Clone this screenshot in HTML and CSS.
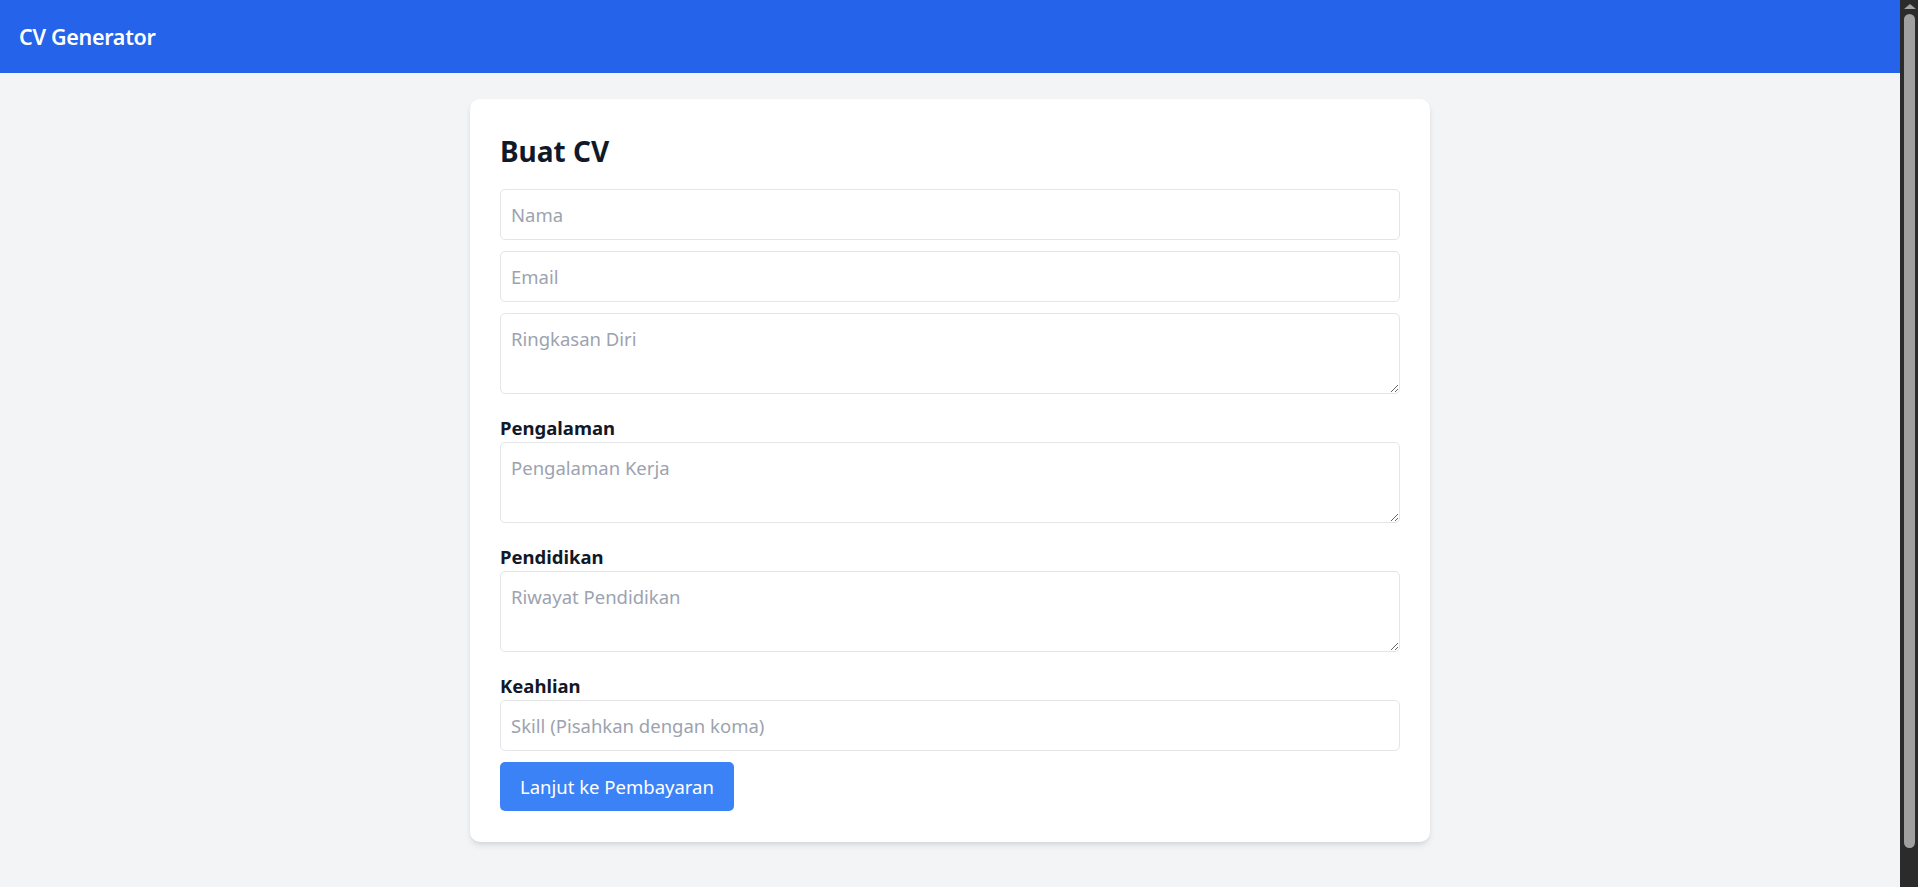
FILE: index.html
```html
<!DOCTYPE html>
<html lang="id">
<head>
<meta charset="utf-8">
<title>CV Generator</title>
<link rel="stylesheet" href="styles.css">
</head>
<body>
<div class="app">
  <header class="topbar">
    <div class="brand">CV Generator</div>
  </header>
  <main class="page">
    <form class="card">
      <h1 class="card-title">Buat CV</h1>
      <div class="fields">
        <input class="field" type="text" placeholder="Nama">
        <input class="field" type="email" placeholder="Email">
        <textarea class="field area" placeholder="Ringkasan Diri"></textarea>
        <div class="group">
          <label class="label">Pengalaman</label>
          <textarea class="field area" placeholder="Pengalaman Kerja"></textarea>
        </div>
        <div class="group">
          <label class="label">Pendidikan</label>
          <textarea class="field area" placeholder="Riwayat Pendidikan"></textarea>
        </div>
        <div class="group">
          <label class="label">Keahlian</label>
          <input class="field" type="text" placeholder="Skill (Pisahkan dengan koma)">
        </div>
        <div class="actions">
          <button class="btn" type="button">Lanjut ke Pembayaran</button>
        </div>
      </div>
    </form>
  </main>
</div>
<div class="scrollbar" aria-hidden="true">
  <span class="scroll-arrow"></span>
  <span class="scroll-thumb"></span>
</div>
</body>
</html>
```
FILE: styles.css
```css
* { box-sizing: border-box; }
html, body { margin: 0; padding: 0; }
body {
  background: #f3f4f6;
  font-family: "Noto Sans", "Open Sans", "DejaVu Sans", sans-serif;
  color: #111827;
}
.app {
  margin-right: 18px;
}
.topbar {
  height: 73px;
  background: #2563eb;
  display: flex;
  align-items: center;
  padding: 0 19px;
}
.brand {
  color: #ffffff;
  font-size: 21.5px;
  font-weight: 600;
  letter-spacing: -0.3px;
  line-height: 32px;
}
.page {
  padding: 26px 0 72px;
}
.card {
  width: 960px;
  margin: 0 auto;
  background: #ffffff;
  border-radius: 10px;
  box-shadow: 0 4px 7px -1px rgba(0,0,0,0.10), 0 2px 5px -2px rgba(0,0,0,0.08);
  padding: 28px 30px 31px;
}
.card-title {
  margin: 0 0 14px;
  font-size: 28px;
  line-height: 48px;
  font-weight: 700;
  color: #111827;
}
.fields {
  display: flex;
  flex-direction: column;
  gap: 11px;
}
.group {
  display: flex;
  flex-direction: column;
  margin-top: 8px;
}
.label {
  font-size: 18.5px;
  line-height: 29px;
  font-weight: 700;
  color: #111827;
}
.field {
  display: block;
  width: 100%;
  height: 51px;
  margin: 0;
  padding: 10px 10px;
  border: 1px solid #e3e5e8;
  border-radius: 5px;
  background: #ffffff;
  font-family: inherit;
  font-size: 18.5px;
  line-height: 29px;
  color: #111827;
  outline: none;
}
.field::placeholder { color: #9ca3af; opacity: 1; }
.area {
  height: 81px;
  resize: vertical;
}
.actions { display: flex; }
.btn {
  height: 49px;
  padding: 0 20px;
  border: none;
  border-radius: 5px;
  background: #3b82f6;
  color: #ffffff;
  font-family: inherit;
  font-size: 18.5px;
  line-height: 29px;
  cursor: pointer;
}
.scrollbar {
  position: fixed;
  top: 0;
  right: 0;
  bottom: 0;
  width: 18px;
  background: #2b2b2b;
  display: flex;
  flex-direction: column;
  align-items: center;
  padding-top: 4px;
}
.scroll-arrow {
  width: 0;
  height: 0;
  border-left: 6px solid transparent;
  border-right: 6px solid transparent;
  border-bottom: 5px solid #a3a3a3;
  margin-left: 1px;
}
.scroll-thumb {
  margin-top: 5px;
  margin-left: 1px;
  width: 11px;
  height: 834px;
  border-radius: 6px;
  background: #a0a0a0;
}
```
